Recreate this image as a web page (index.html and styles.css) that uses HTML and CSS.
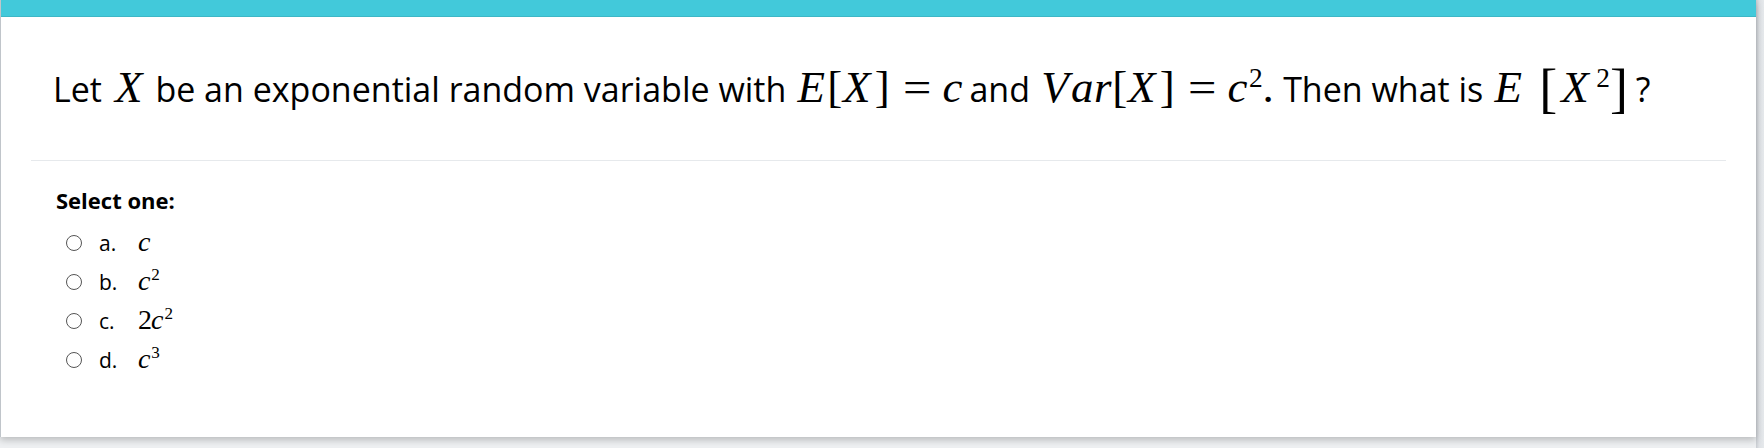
FILE: index.html
```html
<!DOCTYPE html>
<html lang="en">
<head>
<meta charset="utf-8">
<title>Question</title>
<link rel="stylesheet" href="styles.css">
</head>
<body>
<div class="page">
  <div class="card">
    <div class="topbar"></div>
    <div class="qtext">Let <span class="m"><span class="g X">X</span></span> be an exponential random variable with <span class="m"><span class="g E">E</span><span class="g br">[</span><span class="g X">X</span><span class="g br">]</span><span class="g eq">=</span><span class="g c">c</span></span> and <span class="m"><span class="g V">V</span><span class="g a">a</span><span class="g r">r</span><span class="g br">[</span><span class="g X">X</span><span class="g br">]</span><span class="g eq">=</span><span class="g c">c</span><span class="g sup">2</span><span class="g dot">.</span></span> Then what is <span class="m"><span class="g E">E</span><span class="g bbr open">[</span><span class="g X">X</span><span class="g sup">2</span><span class="g bbr close">]</span></span>?</div>
    <div class="divider"></div>
    <div class="answers">
      <div class="prompt">Select one:</div>
      <div class="opt"><span class="radio"></span><span class="ans"><span class="lbl">a.</span><span class="m"><span class="g c">c</span></span></span></div>
      <div class="opt"><span class="radio"></span><span class="ans"><span class="lbl">b.</span><span class="m"><span class="g c">c</span><span class="g sup">2</span></span></span></div>
      <div class="opt"><span class="radio"></span><span class="ans"><span class="lbl">c.</span><span class="m"><span class="g d">2</span><span class="g c">c</span><span class="g sup">2</span></span></span></div>
      <div class="opt"><span class="radio"></span><span class="ans"><span class="lbl">d.</span><span class="m"><span class="g c">c</span><span class="g sup">3</span></span></span></div>
    </div>
  </div>
  <div class="strip"></div>
</div>
</body>
</html>
```

FILE: styles.css
```css
html, body {
  margin: 0;
  padding: 0;
  background: #eef0f2;
}
body {
  font-family: "Open Sans", "Noto Sans", sans-serif;
  color: #000;
}
.page {
  display: flex;
  width: 1764px;
  height: 448px;
  overflow: hidden;
}
.card {
  flex: none;
  width: 1755px;
  height: 437px;
  background: #fff;
  border-left: 1px solid #c0c5ca;
  box-shadow: 0 3px 7px rgba(0, 0, 0, 0.22);
  position: relative;
  z-index: 1;
}
.strip {
  flex: 1;
  background: linear-gradient(to right, #c9cdd2, #dfe2e6 40%, #e6e9ec);
}
.topbar {
  height: 16px;
  background: #42c9da;
  border-bottom: 1px solid #3db7c6;
}
.qtext {
  padding: 48px 52px 47px;
  font-size: 34px;
  line-height: 48px;
  white-space: nowrap;
}

/* math (KaTeX-like layout with substitute glyphs) */
.m {
  font-family: "Liberation Serif", "DejaVu Serif", serif;
  font-size: 45px;
  line-height: 1;
}
.g {
  display: inline-block;
  text-align: center;
  font-style: italic;
  line-height: 1;
}
.g.X { width: 0.795em; }
.g.E { width: 0.713em; }
.g.V { width: 0.718em; }
.g.a { width: 0.494em; }
.g.r { width: 0.421em; }
.g.c { width: 0.404em; }
.g.br {
  width: 0.26em;
  font-style: normal;
}
.g.eq {
  width: 0.726em;
  margin: 0 0.19em 0 0.33em;
  font-style: normal;
  transform: scaleX(1.12);
}
.g.dot {
  width: 0.26em;
  font-style: normal;
  text-align: left;
}
.g.d {
  width: 0.467em;
  font-style: normal;
}
.g.sup {
  font-size: 0.61em;
  width: 0.5em;
  font-style: normal;
  line-height: 0.5;
  vertical-align: 0.55em;
  text-align: left;
  padding-left: 0.12em;
}
.g.bbr {
  font-size: 1.2em;
  width: 0.48em;
  font-style: normal;
  line-height: 0.8;
  vertical-align: -0.1em;
}
.g.bbr.open {
  text-align: right;
  margin-left: 0.13em;
}
.g.bbr.close {
  text-align: left;
}

.divider {
  margin: 0 30px;
  height: 1px;
  background: #e6e9ec;
}
.answers {
  padding: 24px 0 0 55px;
}
.prompt {
  font-size: 22px;
  font-weight: 700;
  line-height: 30px;
  margin-bottom: 8px;
}
.opt {
  display: flex;
  align-items: center;
  height: 39px;
}
.radio {
  box-sizing: border-box;
  flex: none;
  width: 16px;
  height: 16px;
  margin: 0 17px 0 10px;
  border: 1.5px solid #555;
  border-radius: 50%;
}
.ans {
  font-size: 21px;
  line-height: 30px;
  white-space: nowrap;
}
.lbl {
  display: inline-block;
  width: 39px;
}
.ans .m {
  font-size: 28px;
}
```
